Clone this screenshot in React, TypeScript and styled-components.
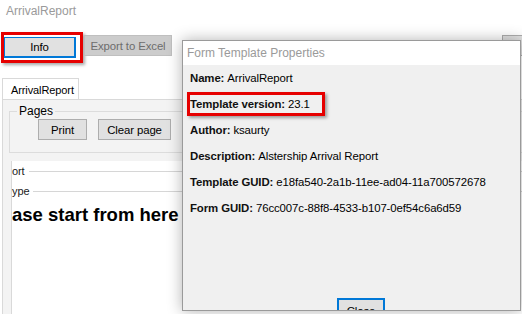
import React from "react";
import styled, { createGlobalStyle } from "styled-components";

const GlobalStyle = createGlobalStyle`
  html, body {
    margin: 0;
    padding: 0;
    background: #ffffff;
  }
  body {
    font-family: "Liberation Sans", Arial, sans-serif;
    font-size: 11px;
    letter-spacing: -0.1px;
    color: #000;
  }
`;

const Page = styled.div`
  position: relative;
  width: 522px;
  height: 314px;
  overflow: hidden;
  background: #ffffff;
`;

const WindowTitle = styled.div`
  height: 22px;
  padding: 4px 0 0 6px;
  box-sizing: border-box;
  color: #9a9a9a;
  font-size: 12px;
  letter-spacing: 0;
  line-height: 14px;
`;

const Toolbar = styled.div`
  display: flex;
  align-items: flex-start;
  margin-top: 10px;
  height: 29px;
`;

const Highlight = styled.div`
  display: flex;
  align-items: center;
  margin-left: 1px;
  padding: 1px 4px 1px 0;
  border: 3px solid #e60000;
  box-shadow: 2px 2px 3px rgba(0, 0, 0, 0.35);
  height: 23px;
`;

const WinButton = styled.button<{ $focused?: boolean; $disabled?: boolean; $width: number }>`
  width: ${(p) => p.$width}px;
  height: 21px;
  padding: 0;
  margin: 0;
  box-sizing: border-box;
  font-family: "Liberation Sans", Arial, sans-serif;
  font-size: 11.4px;
  letter-spacing: -0.1px;
  white-space: nowrap;
  background: ${(p) => (p.$disabled ? "#cccccc" : "#e1e1e1")};
  color: ${(p) => (p.$disabled ? "#6d6d6d" : "#000")};
  border: 1px solid ${(p) => (p.$focused ? "#0078d7" : p.$disabled ? "#bfbfbf" : "#adadad")};
  ${(p) => (p.$focused ? "border-width: 1px 2px 2px 1px;" : "")}
`;

const ExportButton = styled(WinButton)`
  margin: 3px 0 0 1px;
`;

const EdgeButton = styled(WinButton)`
  margin: 3px -20px 0 auto;
  flex-shrink: 0;
`;

const TabStrip = styled.div`
  display: flex;
  margin: 17px 0 0 2px;
  height: 21px;
`;

const Tab = styled.div`
  width: 77px;
  box-sizing: border-box;
  padding: 5px 0 0 8px;
  background: #ffffff;
  border: 1px solid #d9d9d9;
  border-bottom: none;
  line-height: 13px;
`;

const TabPage = styled.div`
  margin-left: 2px;
  height: 240px;
  background: #f3f3f3;
  border: 1px solid #d9d9d9;
  border-right: none;
  padding: 4px 0 0 6px;
  box-sizing: border-box;
`;

const GroupBox = styled.fieldset`
  margin: 0;
  padding: 0;
  height: 49px;
  box-sizing: border-box;
  border: 1px solid #dcdcdc;
  border-radius: 0;
  width: 520px;
`;

const Legend = styled.legend`
  padding: 0 2px;
  margin-left: 7px;
  font-size: 12px;
  letter-spacing: 0;
`;

const ButtonRow = styled.div`
  display: flex;
  gap: 11px;
  padding: 1px 0 0 28px;
`;

const Canvas = styled.div`
  margin-top: 8px;
  margin-left: 2px;
  height: 160px;
  background: #ffffff;
  border-left: 1px solid #d9d9d9;
  display: flex;
  flex-direction: column;
`;

const FieldLine = styled.div`
  display: flex;
  align-items: center;
  height: 20px;
  color: #1a1a1a;
  &::after {
    content: "";
    flex: 1;
    height: 1px;
    background: #d6d6d6;
    margin-left: 4px;
  }
`;

const BigText = styled.div`
  margin-top: 3px;
  font-weight: bold;
  font-size: 18.5px;
  letter-spacing: 0;
  line-height: 22px;
  white-space: nowrap;
`;

const Dialog = styled.div`
  position: absolute;
  left: 182px;
  top: 40px;
  width: 339px;
  height: 271px;
  box-sizing: border-box;
  border: 1px solid #9a9a9a;
  background: #f0f0f0;
  box-shadow: 0 0 14px rgba(0, 0, 0, 0.3);
  display: flex;
  flex-direction: column;
  overflow: hidden;
`;

const DialogTitle = styled.div`
  height: 24px;
  flex-shrink: 0;
  background: #ffffff;
  color: #9a9a9a;
  padding-left: 4px;
  font-size: 12px;
  letter-spacing: 0;
  line-height: 24px;
`;

const DialogBody = styled.div`
  display: flex;
  flex-direction: column;
  padding-left: 4px;
  font-size: 11.4px;
`;

const PropRow = styled.div`
  height: 26px;
  display: flex;
  align-items: center;
`;

const PropText = styled.span<{ $marked?: boolean }>`
  height: 24px;
  box-sizing: border-box;
  display: flex;
  align-items: center;
  white-space: nowrap;
  border: 3px solid ${(p) => (p.$marked ? "#e60000" : "transparent")};
  padding-right: ${(p) => (p.$marked ? "12px" : "0")};
  box-shadow: ${(p) => (p.$marked ? "2px 2px 3px rgba(0, 0, 0, 0.35)" : "none")};
`;

const PropLabel = styled.b`
  font-weight: bold;
  margin-right: 3px;
  color: #111;
`;

const CloseButton = styled(WinButton)`
  margin: 77px 0 0 150px;
  height: 23px;
  border: 2px solid #0078d7;
  padding-top: 2px;
  align-self: flex-start;
  flex-shrink: 0;
`;

const props: { label: string; value: string; marked?: boolean }[] = [
  { label: "Name:", value: "ArrivalReport" },
  { label: "Template version:", value: "23.1", marked: true },
  { label: "Author:", value: "ksaurty" },
  { label: "Description:", value: "Alstership Arrival Report" },
  { label: "Template GUID:", value: "e18fa540-2a1b-11ee-ad04-11a700572678" },
  { label: "Form GUID:", value: "76cc007c-88f8-4533-b107-0ef54c6a6d59" },
];

export default function App() {
  return (
    <Page>
      <GlobalStyle />
      <WindowTitle>ArrivalReport</WindowTitle>
      <Toolbar>
        <Highlight>
          <WinButton $width={72} $focused>
            Info
          </WinButton>
        </Highlight>
        <ExportButton $width={88} $disabled>
          Export to Excel
        </ExportButton>
        <EdgeButton $width={40}> </EdgeButton>
      </Toolbar>
      <TabStrip>
        <Tab>ArrivalReport</Tab>
      </TabStrip>
      <TabPage>
        <GroupBox>
          <Legend>Pages</Legend>
          <ButtonRow>
            <WinButton $width={49}>Print</WinButton>
            <WinButton $width={73}>Clear page</WinButton>
          </ButtonRow>
        </GroupBox>
        <Canvas>
          <FieldLine>ort</FieldLine>
          <FieldLine>ype</FieldLine>
          <BigText>ase start from here</BigText>
        </Canvas>
      </TabPage>
      <Dialog>
        <DialogTitle>Form Template Properties</DialogTitle>
        <DialogBody>
          {props.map((p) => (
            <PropRow key={p.label}>
              <PropText $marked={p.marked}>
                <PropLabel>{p.label}</PropLabel>
                {p.value}
              </PropText>
            </PropRow>
          ))}
          <CloseButton $width={48} $focused>
            Close
          </CloseButton>
        </DialogBody>
      </Dialog>
    </Page>
  );
}
